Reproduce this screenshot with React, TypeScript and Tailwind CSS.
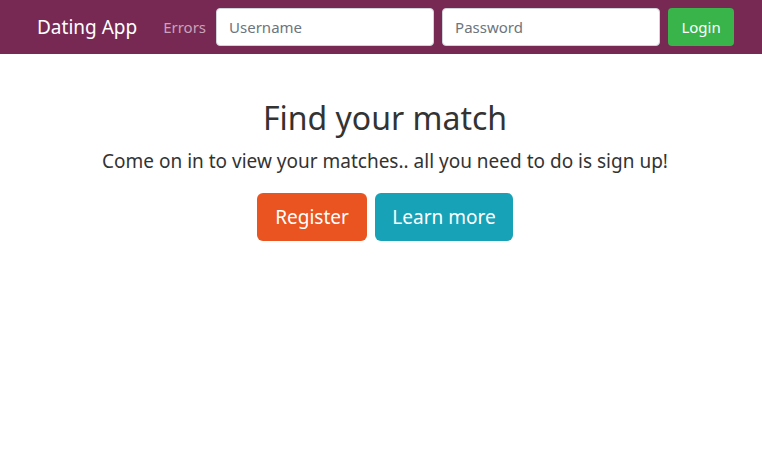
import React from "react";

export default function App() {
  const font = { fontFamily: '"Noto Sans", "Open Sans", sans-serif' };
  return (
    <div className="min-h-[468px] bg-white" style={font}>
      <nav className="h-[54px] bg-[#772953] flex items-center pl-[37px]">
        <span className="whitespace-nowrap shrink-0 text-[19px] text-white mr-[26px] leading-none">Dating App</span>
        <span className="shrink-0 text-[15px] text-[#c9a3b9] mr-[10px]">Errors</span>
        <input
          className="shrink-0 w-[218px] h-[38px] rounded-[4px] bg-white border border-[#ced4da] px-[12px] text-[15px] text-[#495057] placeholder:text-[#6c757d] outline-none mr-[8px]"
          placeholder="Username"
        />
        <input
          className="shrink-0 w-[218px] h-[38px] rounded-[4px] bg-white border border-[#ced4da] px-[12px] text-[15px] text-[#495057] placeholder:text-[#6c757d] outline-none mr-[8px]"
          placeholder="Password"
          type="password"
        />
        <button className="shrink-0 w-[66px] h-[38px] rounded-[4px] bg-[#38b44a] text-white text-[15px]">Login</button>
      </nav>
      <main className="pt-[40px] pl-[8px] text-center text-[#333333]">
        <h1 className="text-[32px] leading-[48px] font-normal">Find your match</h1>
        <p className="text-[19px] leading-[30px] mt-[4px]">Come on in to view your matches.. all you need to do is sign up!</p>
        <div className="mt-[17px] flex justify-center gap-[8px]">
          <button className="w-[110px] h-[48px] rounded-[6px] bg-[#e95420] text-white text-[19px]">Register</button>
          <button className="w-[138px] h-[48px] rounded-[6px] bg-[#17a2b8] text-white text-[19px]">Learn more</button>
        </div>
      </main>
    </div>
  );
}
